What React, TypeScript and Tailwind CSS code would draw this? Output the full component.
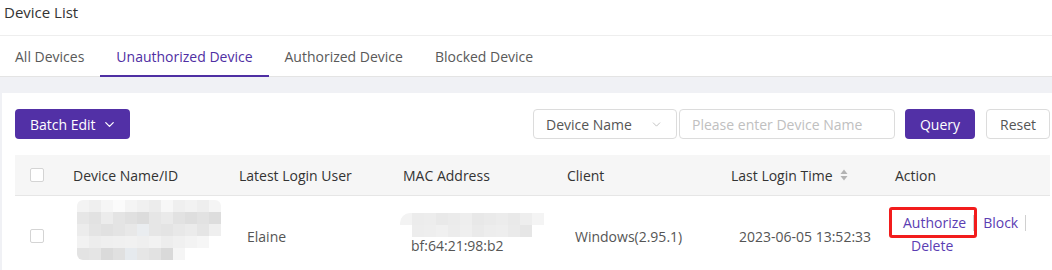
import { ChevronDown } from "lucide-react";

const tabs = ["All Devices", "Unauthorized Device", "Authorized Device", "Blocked Device"];

// mosaic blur for the masked device name (5 rows x 12 cols)
const deviceMosaic = [
  ["bg-[#f3f3f3]", "bg-[#efefef]", "bg-[#f6f6f6]", "bg-[#fbfbfb]", "bg-[#f4f4f4]", "bg-[#f0f0f0]", "bg-[#ececec]", "bg-[#f7f7f7]", "bg-[#efefef]", "bg-[#f2f2f2]", "bg-[#eeeeee]", "bg-[#f5f5f5]"],
  ["bg-[#e6e6e6]", "bg-[#e2e2e2]", "bg-[#ececec]", "bg-[#e4e4e4]", "bg-[#e0e0e0]", "bg-[#dcdcdc]", "bg-[#e6e6e6]", "bg-[#eaeaea]", "bg-[#e2e2e2]", "bg-[#dedede]", "bg-[#e2e2e2]", "bg-[#dddddd]"],
  ["bg-[#ececec]", "bg-[#e4e4e4]", "bg-[#e1e1e1]", "bg-[#e4e4e4]", "bg-[#e8e8e8]", "bg-[#eaedf0]", "bg-[#e6e6e6]", "bg-[#e4e4e4]", "bg-[#e8e8e8]", "bg-[#ebebeb]", "bg-[#e5e5e5]", "bg-[#efefef]"],
  ["bg-[#f2f2f2]", "bg-[#ededed]", "bg-[#efefef]", "bg-[#f0f0f0]", "bg-[#f1f1f1]", "bg-[#efefef]", "bg-[#f2f2f2]", "bg-[#ededed]", "bg-[#f0f0f0]", "bg-[#f3f3f3]", "bg-[#f6f6f6]", "bg-white"],
  ["bg-[#e3e3e3]", "bg-[#e5e5e5]", "bg-[#dadada]", "bg-[#e0e0e0]", "bg-[#e6eaee]", "bg-[#e6e6e6]", "bg-[#e2e2e2]", "bg-[#d9d9d9]", "bg-[#f5f5f5]", "bg-white", "bg-white", "bg-white"],
];

const macMosaic = [
  ["bg-[#f3f3f3]", "bg-[#ececec]", "bg-[#ededed]", "bg-[#e9e9e9]", "bg-[#ebebeb]", "bg-[#eeeeee]", "bg-[#e8e8e8]", "bg-[#eaeaea]", "bg-[#ececec]", "bg-[#e9e9e9]", "bg-[#eeeeee]", "bg-[#f4f4f4]"],
  ["bg-white", "bg-[#ededed]", "bg-[#eeeeee]", "bg-[#f0f0f0]", "bg-[#ececec]", "bg-[#efefef]", "bg-[#eaeaea]", "bg-[#ededed]", "bg-[#eeeeee]", "bg-[#eaeaea]", "bg-[#e6e6e6]", "bg-white"],
];

const Mosaic = ({ rows, className }: { rows: string[][]; className?: string }) => (
  <div className={className}>
    {rows.map((row, i) => (
      <div key={i} className="flex">
        {row.map((c, j) => (
          <div key={j} className={`w-[12px] h-[12px] ${c}`} />
        ))}
      </div>
    ))}
  </div>
);

const Checkbox = () => (
  <span className="block w-[14px] h-[14px] rounded-[2px] border border-[#d4d4d4] bg-white" />
);

const SortIcon = () => (
  <svg width="8" height="12" viewBox="0 0 8 12" className="ml-[7px]">
    <path d="M4 0.5 L7.5 5 L0.5 5 Z" fill="#b3b3b3" />
    <path d="M4 11.5 L7.5 7 L0.5 7 Z" fill="#b3b3b3" />
  </svg>
);

export default function App() {
  return (
    <div className="w-[1052px] h-[270px] overflow-hidden bg-white font-['Open_Sans',sans-serif] text-[14px] text-[#333]">
      {/* title */}
      <div className="h-[36px] border-b border-[#eeeeee] pl-[4px] pt-[1px] leading-[22px] text-[15px] text-[#333]">
        Device List
      </div>

      {/* tabs */}
      <div className="flex h-[41px] border-b border-[#e4e4e4]">
        {tabs.map((t, i) => (
          <div
            key={t}
            className={`relative flex items-center px-4 ${i === 0 ? "pl-[15px]" : ""} ${
              i === 1 ? "text-[#4f2fa3]" : "text-[#595959]"
            }`}
          >
            {t}
            {i === 1 && <span className="absolute left-0 right-0 bottom-[-1px] h-[2px] bg-[#4f2fa3]" />}
          </div>
        ))}
      </div>

      <div className="h-[16px] bg-[#f0f1f5]" />

      {/* card */}
      <div className="border-l-2 border-[#f0f1f5] pl-[13px] pr-[2px] pt-[16px]">
        <div className="flex items-center justify-between h-[30px]">
          <button className="flex items-center h-[30px] w-[115px] rounded-[4px] bg-[#5230a6] pl-[15px] text-white">
            Batch Edit
            <ChevronDown size={15} strokeWidth={2} className="ml-[6px]" />
          </button>
          <div className="flex items-center">
            <div className="flex items-center justify-between h-[30px] w-[144px] rounded-[4px] border border-[#dcdcdc] pl-[12px] pr-[13px] text-[#555]">
              Device Name
              <ChevronDown size={13} strokeWidth={1.5} className="text-[#b5b5b5]" />
            </div>
            <div className="flex items-center h-[30px] w-[216px] ml-[2px] rounded-[4px] border border-[#dcdcdc] pl-[12px] text-[#c0c0c0]">
              Please enter Device Name
            </div>
            <button className="h-[30px] w-[70px] ml-[10px] rounded-[4px] bg-[#5230a6] text-white">Query</button>
            <button className="h-[30px] w-[64px] ml-[11px] rounded-[4px] border border-[#dcdcdc] bg-white text-[#555]">
              Reset
            </button>
          </div>
        </div>

        {/* table */}
        <div className="mt-[16px]">
          <div className="grid grid-cols-[43px_166px_164px_164px_164px_164px_1fr] h-[41px] bg-[#f6f6f6] border-b border-[#e6e6e6] text-[#333]">
            <div className="flex items-center justify-center">
              <Checkbox />
            </div>
            <div className="flex items-center pl-[15px]">Device Name/ID</div>
            <div className="flex items-center pl-[15px]">Latest Login User</div>
            <div className="flex items-center pl-[15px]">MAC Address</div>
            <div className="flex items-center pl-[15px]">Client</div>
            <div className="flex items-center pl-[15px]">
              Last Login Time
              <SortIcon />
            </div>
            <div className="flex items-center pl-[15px]">Action</div>
          </div>

          <div className="grid grid-cols-[43px_166px_164px_164px_164px_164px_1fr] h-[80px] text-[#555]">
            <div className="flex items-center justify-center">
              <Checkbox />
            </div>
            <div className="flex items-start pl-[19px] pt-[4px]">
              <Mosaic rows={deviceMosaic} className="blur-[0.6px] rounded-[6px] overflow-hidden" />
            </div>
            <div className="flex items-center pl-[23px]">Elaine</div>
            <div className="flex flex-col pl-[12px] pt-[17px]">
              <Mosaic rows={macMosaic} className="blur-[0.6px] rounded-l-[10px] overflow-hidden w-fit" />
              <span className="pl-[11px] leading-[20px] mt-[-1px]">bf:64:21:98:b2</span>
            </div>
            <div className="flex items-center pl-[23px]">Windows(2.95.1)</div>
            <div className="flex items-center pl-[23px]">2023-06-05 13:52:33</div>
            <div className="relative pl-[23px] pt-[15px] leading-[23px] text-[#5b3db3]">
              <div className="flex items-center">
                <span>Authorize</span>
                <span className="ml-[7px] h-[16px] w-px bg-[#d0d0d0]" />
                <span className="ml-[9px]">Block</span>
                <span className="ml-[7px] h-[16px] w-px bg-[#d0d0d0]" />
              </div>
              <div className="pl-[8px]">Delete</div>
              <span className="absolute left-[9px] top-[11px] w-[88px] h-[31px] rounded-[3px] border-[3px] border-[#f21c1c]" />
            </div>
          </div>
        </div>
      </div>
    </div>
  );
}
